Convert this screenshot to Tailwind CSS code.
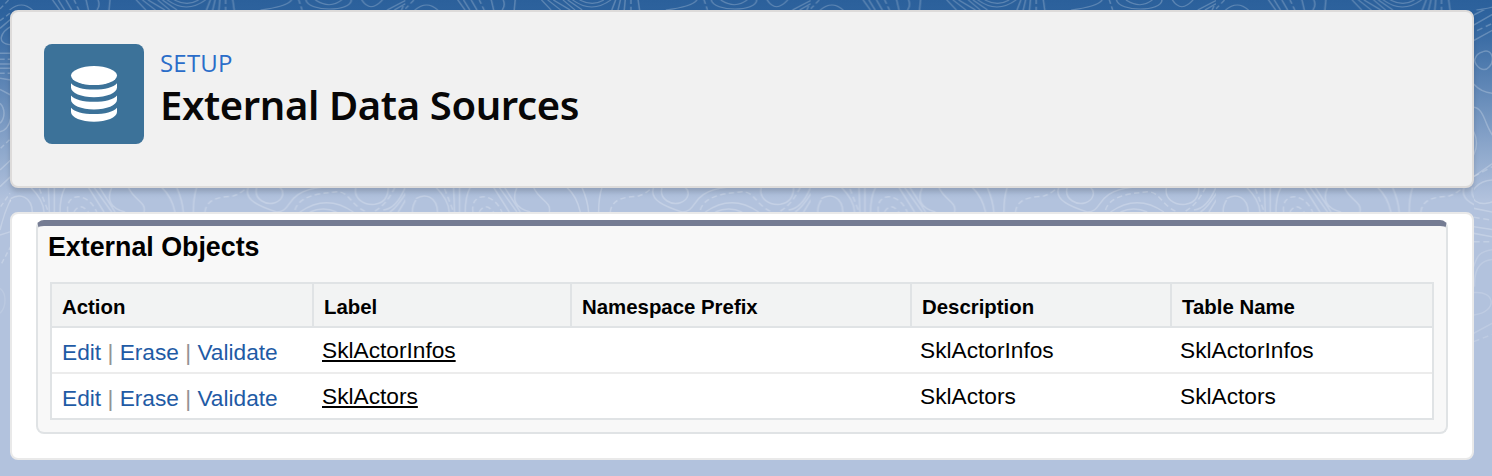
<!DOCTYPE html>
<html lang="en">
<head>
<meta charset="utf-8">
<title>External Data Sources</title>
<script src="https://cdn.jsdelivr.net/npm/@tailwindcss/browser@4"></script>
</head>
<body class="relative h-[476px] w-[1492px] overflow-hidden bg-[#b2c2dd] font-['Liberation_Sans',sans-serif] text-black">
<div class="absolute inset-0 bg-[linear-gradient(to_bottom,#2b609b_0px,#2f649f_20px,#b2c2dd_200px)]"></div>
<!-- contour line background, repeats every 405px -->
<svg class="absolute inset-0" width="1492" height="476" fill="none">
  <defs>
    <pattern id="topo" width="405.3" height="476" patternUnits="userSpaceOnUse">
      <g stroke="#fff" stroke-opacity=".23" fill="none">
        <g transform="scale(.478 .333)" stroke-width="3.2">
          <path d="M20 30Q45 0 68 30M110 0L125 30M122 0L135 30M138 0L150 30M180 0L185 30M205 0Q210 15 203 30M230 0L228 30M285 0L305 30M298 0L325 30M310 0L345 30M330 0L355 30M340 0L370 30M350 0Q390 42 430 0M365 0Q392 20 415 0M432 30L440 0M445 30L450 0M458 30L460 0M487 0L490 30M545 30Q600 20 610 0M640 0C645 36 735 36 735 0M660 0Q690 28 715 0M757 0Q775 40 800 0M810 30L850 0M825 30L862 0"/>
          <path stroke-dasharray="12 8" d="M0 27L18 0M155 0L165 30M472 0V30M625 0L632 30M840 30L846 12"/>
        </g>
        <g transform="translate(0 180) scale(.3333)" stroke-width="4.5">
          <path d="M22 96Q20 80 32 60M32 56C60 38 95 50 97 96M92 22Q130 60 132 96M145 22L148 96M163 22V96M180 96Q180 50 195 22M265 22L312 96M282 22L335 96M298 22L345 96M335 22Q310 80 375 96M385 22C400 60 440 65 432 96M485 22Q515 50 525 96M530 22Q547 60 550 96M590 22Q580 55 580 96M745 22C730 60 780 80 830 96C880 96 850 35 965 22M770 22C760 60 800 76 825 68C850 60 855 35 840 22M900 96Q980 40 1060 96M930 96Q970 78 1010 96M1068 22C1060 55 1090 76 1125 73C1160 68 1165 40 1165 22M1215 24Q1190 85 1150 90M1228 22Q1195 80 1170 96M1240 22L1195 96"/>
          <path stroke-dasharray="16 10" d="M118 26L145 96M203 96C195 35 265 35 290 96M222 96Q240 65 265 96M615 96C620 50 670 52 700 48Q720 42 738 25M885 90C900 40 980 40 1010 35C1050 35 1050 75 1100 96M1185 22Q1160 75 1120 96"/>
        </g>
      </g>
    </pattern>
  </defs>
  <rect width="1492" height="11" fill="url(#topo)"/>
  <rect x="10" y="186" width="1464" height="28" fill="url(#topo)"/>
  <svg x="0" y="10" width="11" height="460" viewBox="0 10 11 460">
    <g transform="scale(.3333)" stroke-width="4.5" stroke="#fff" stroke-opacity=".23">
      <path d="M0 85L32 58M32 80C5 95 -15 130 32 134M0 160H32M0 192H32M0 205H32M0 235L32 240M0 268L32 285M0 310C16 325 16 355 0 370M0 395Q25 390 32 355M0 510L32 480M0 560L32 530M0 690Q12 640 32 598M0 705L32 695"/>
      <path stroke-dasharray="14 9" d="M0 62L32 38M0 178H32M0 220H32M2 445L30 418M2 620L30 580M5 790L32 740"/>
      <path stroke-opacity=".12" d="M0 865C20 880 20 920 0 940"/>
    </g>
  </svg>
  <svg x="1474" y="10" width="18" height="460" viewBox="1474 10 18 460">
    <g transform="translate(1392 0) scale(.3333)" stroke-width="4.5" stroke="#fff" stroke-opacity=".23">
      <path d="M245 45L310 12M245 75L310 38M245 122L310 86M273 155C300 145 310 180 292 200C275 220 250 200 248 180Q252 160 273 155M245 252Q270 280 310 280M245 322C280 325 280 390 310 415M245 395Q262 430 245 465M310 485L245 530M310 540C255 540 225 580 250 603C270 618 300 608 310 600M245 625L310 638M245 680L310 690M245 700L310 712"/>
      <path stroke-dasharray="18 11" d="M255 92L310 66M245 530L310 495M245 652L310 662M245 725H310"/>
      <g stroke-opacity=".16"><path d="M310 748C260 752 255 770 245 800M248 860C245 800 270 778 310 778M245 878C310 870 320 935 245 945M245 1000L310 965"/><path stroke-dasharray="18 11" d="M245 1025L310 1000"/></g>
    </g>
  </svg>
</svg>

<main class="relative flex flex-col gap-6 py-[10px] pl-[10px] pr-[18px]">
  <header class="flex h-[178px] items-start gap-4 rounded-lg border-2 border-[#dddbda] bg-[#f1f1f1] p-8 shadow-[0_4px_5px_rgba(0,0,0,0.14)]">
    <div class="size-[100px] shrink-0 rounded-lg bg-[#3c7299]">
      <svg width="100" height="100" viewBox="0 0 100 100" fill="#fff">
        <ellipse cx="50" cy="31.6" rx="23" ry="9.5"/>
        <path id="band" d="M27 39.2C30.500 43.400 39 45.600 50 45.600S69.500 43.400 73 39.200V43.500C73 49 62.500 53.200 50 53.200S27 49 27 43.500Z"/>
        <use href="#band" y="12.2"/>
        <use href="#band" y="24.500"/>
      </svg>
    </div>
    <div class="flex flex-col font-['Open_Sans',sans-serif]">
      <p class="mt-[3px] h-8 text-[24px] leading-8 tracking-[0.2px] text-[#2a6dc9]">SETUP</p>
      <h1 class="mt-px whitespace-nowrap font-['Noto_Sans',sans-serif] text-[40px] font-semibold leading-[50px] tracking-[-0.38px] text-[#080707]">External Data Sources</h1>
    </div>
  </header>

  <section class="h-[248px] rounded-lg border-2 border-[#e9e9e9] bg-white pl-6 pr-6 pt-[6px]">
    <div class="h-[214px] w-[1412px] rounded-lg border-2 border-t-[6px] border-[#e0e3e5] border-t-[#757c93] bg-[#f8f8f8] px-3">
      <h2 class="-ml-[2px] mb-[14px] h-[42px] text-[26.8px] font-bold leading-[42px]">External Objects</h2>
      <div class="grid w-[1384px] grid-cols-[260px_258px_340px_260px_262px] grid-rows-[44px_46px_44px] border-2 border-[#e0e3e5] bg-white text-[22.7px]">
        <div class="border-b-2 border-[#e0e3e5] bg-[#f2f3f3] pl-[10px] text-[20.4px] font-bold leading-[46px]">Action</div>
        <div class="border-b-2 border-l-2 border-[#e0e3e5] bg-[#f2f3f3] pl-[10px] text-[20.4px] font-bold leading-[46px]">Label</div>
        <div class="border-b-2 border-l-2 border-[#e0e3e5] bg-[#f2f3f3] pl-[10px] text-[20.4px] font-bold leading-[46px]">Namespace Prefix</div>
        <div class="border-b-2 border-l-2 border-[#e0e3e5] bg-[#f2f3f3] pl-[10px] text-[20.4px] font-bold leading-[46px]">Description</div>
        <div class="border-b-2 border-l-2 border-[#e0e3e5] bg-[#f2f3f3] pl-[10px] text-[20.4px] font-bold leading-[46px]">Table Name</div>

        <div class="whitespace-nowrap border-b-2 border-[#ececec] pl-[10px] leading-[48px] text-[#939393]"><a class="text-[#1f5ba5]">Edit</a> | <a class="text-[#1f5ba5]">Erase</a> | <a class="text-[#1f5ba5]">Validate</a></div>
        <div class="border-b-2 border-[#ececec] pl-[10px] leading-[44px]"><a class="underline decoration-2 underline-offset-[2px] [text-decoration-skip-ink:none]">SklActorInfos</a></div>
        <div class="border-b-2 border-[#ececec]"></div>
        <div class="border-b-2 border-[#ececec] pl-[10px] leading-[44px]">SklActorInfos</div>
        <div class="border-b-2 border-[#ececec] pl-[10px] leading-[44px]">SklActorInfos</div>

        <div class="whitespace-nowrap pl-[10px] leading-[48px] text-[#939393]"><a class="text-[#1f5ba5]">Edit</a> | <a class="text-[#1f5ba5]">Erase</a> | <a class="text-[#1f5ba5]">Validate</a></div>
        <div class="pl-[10px] leading-[44px]"><a class="underline decoration-2 underline-offset-[2px] [text-decoration-skip-ink:none]">SklActors</a></div>
        <div></div>
        <div class="pl-[10px] leading-[44px]">SklActors</div>
        <div class="pl-[10px] leading-[44px]">SklActors</div>
      </div>
    </div>
  </section>
</main>
</body>
</html>
